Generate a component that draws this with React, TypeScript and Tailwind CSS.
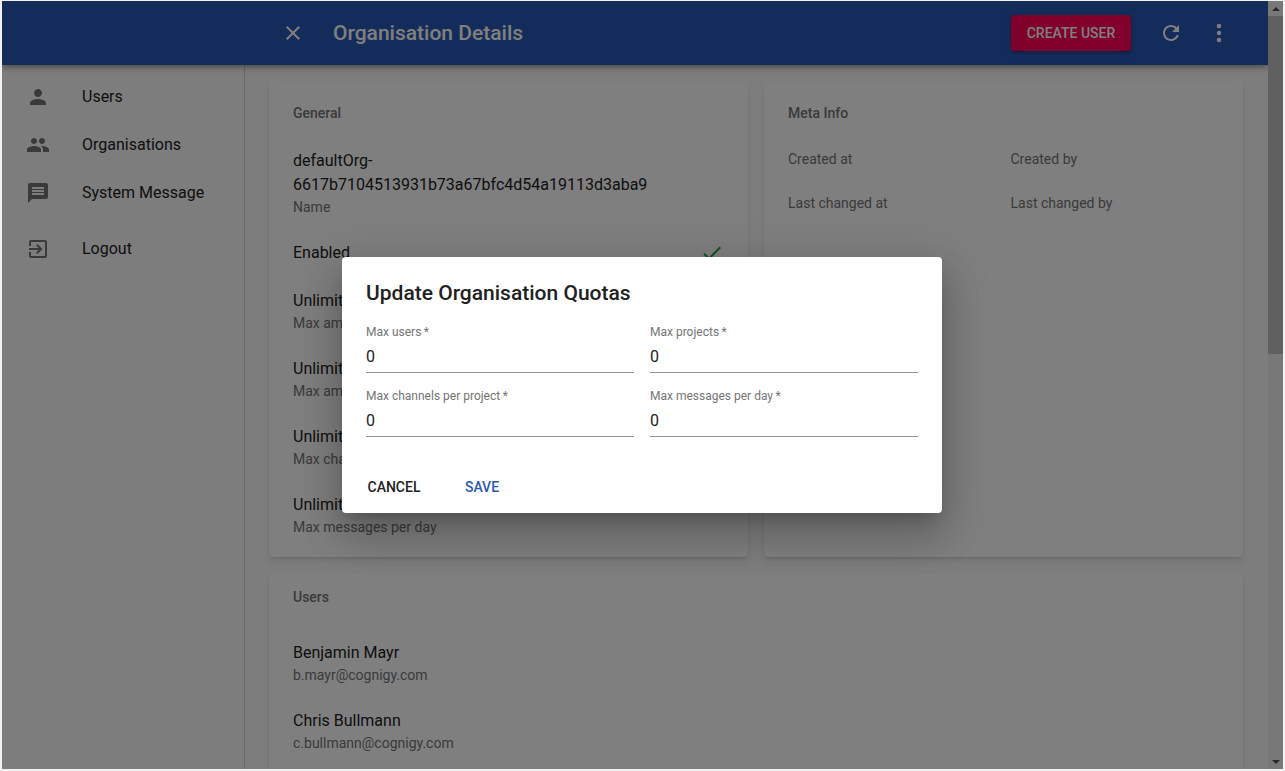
import React from 'react';
import { MoreVertical } from 'lucide-react';

const Ic: React.FC<{ d: string; className?: string }> = ({ d, className }) => (
  <svg viewBox="0 0 24 24" className={className} fill="currentColor">
    <path d={d} />
  </svg>
);

const PERSON = 'M12 12c2.21 0 4-1.79 4-4s-1.79-4-4-4-4 1.79-4 4 1.79 4 4 4zm0 2c-2.67 0-8 1.34-8 4v2h16v-2c0-2.66-5.33-4-8-4z';
const PEOPLE = 'M16 11c1.66 0 2.99-1.34 2.99-3S17.66 5 16 5c-1.66 0-3 1.34-3 3s1.34 3 3 3zm-8 0c1.66 0 2.99-1.34 2.99-3S9.66 5 8 5C6.34 5 5 6.34 5 8s1.34 3 3 3zm0 2c-2.33 0-7 1.17-7 3.5V19h14v-2.5c0-2.33-4.67-3.5-7-3.5zm8 0c-.29 0-.62.02-.97.05 1.16.84 1.97 1.97 1.97 3.45V19h6v-2.5c0-2.33-4.67-3.5-7-3.5z';
const MESSAGE = 'M20 2H4c-1.1 0-1.99.9-1.99 2L2 22l4-4h14c1.1 0 2-.9 2-2V4c0-1.1-.9-2-2-2zm-2 12H6v-2h12v2zm0-3H6V9h12v2zm0-3H6V6h12v2z';
const EXIT = 'M10.09 15.59L11.5 17l5-5-5-5-1.41 1.41L12.67 11H3v2h9.67l-2.58 2.59zM19 3H5c-1.11 0-2 .9-2 2v4h2V5h14v14H5v-4H3v4c0 1.1.89 2 2 2h14c1.1 0 2-.9 2-2V5c0-1.1-.9-2-2-2z';
const CLOSE = 'M19 6.41L17.59 5 12 10.59 6.41 5 5 6.41 10.59 12 5 17.59 6.41 19 12 13.41 17.59 19 19 17.59 13.41 12z';
const REFRESH = 'M17.65 6.35C16.2 4.9 14.21 4 12 4c-4.42 0-7.99 3.58-7.99 8s3.57 8 7.99 8c3.73 0 6.84-2.55 7.73-6h-2.08c-.82 2.33-3.04 4-5.65 4-3.31 0-6-2.69-6-6s2.69-6 6-6c1.66 0 3.14.69 4.22 1.78L13 11h7V4l-2.35 2.35z';
const CHECK = 'M9 16.17L4.83 12l-1.42 1.41L9 19 21 7l-1.41-1.41z';

const NAV = [
  { label: 'Users', d: PERSON, cls: 'h-[48px]' },
  { label: 'Organisations', d: PEOPLE, cls: 'h-[48px]' },
  { label: 'System Message', d: MESSAGE, cls: 'h-[48px]' },
  { label: 'Logout', d: EXIT, cls: 'h-[48px] mt-2' },
];

const Field: React.FC<{ primary: string; secondary: string }> = ({ primary, secondary }) => (
  <div className="mb-[24px]">
    <div className="text-base leading-6 text-[#212121]">{primary}</div>
    <div className="text-sm leading-5 text-[#757575]">{secondary}</div>
  </div>
);

const QuotaInput: React.FC<{ label: string }> = ({ label }) => (
  <div className="h-[48px] flex flex-col border-b border-[#949494]">
    <div className="text-xs leading-[14px] text-[#757575]">{label}{'\u2009'}*</div>
    <div className="mt-[4px] text-base leading-[28px] text-[#212121]">0</div>
  </div>
);

export default function App() {
  return (
    <div className="h-[771px] overflow-hidden bg-[#f2f2f2] pl-[2px] pr-[2px] pt-px pb-[2px] font-['Roboto',sans-serif]">
      <div className="relative h-full flex overflow-hidden">
        <div className="flex-1 min-w-0 flex flex-col bg-[#fafafa] overflow-hidden">
          {/* Top bar */}
          <header className="h-[64px] shrink-0 bg-[#2858b4] flex items-center pl-[279px] pr-[37px] shadow-[0_2px_4px_-1px_rgba(0,0,0,0.2),0_4px_5px_0_rgba(0,0,0,0.14),0_1px_10px_0_rgba(0,0,0,0.12)] z-10">
            <Ic d={CLOSE} className="w-6 h-6 text-white" />
            <h1 className="ml-[28px] text-[21px] leading-8 font-medium text-white">Organisation Details</h1>
            <button className="ml-auto w-[120px] h-[36px] rounded bg-[#ff0054] text-white text-sm font-medium shadow-[0_1px_5px_0_rgba(0,0,0,0.2),0_2px_2px_0_rgba(0,0,0,0.14),0_3px_1px_-2px_rgba(0,0,0,0.12)]">CREATE USER</button>
            <Ic d={REFRESH} className="ml-[28px] w-6 h-6 text-white" />
            <MoreVertical className="ml-[24px] w-6 h-6 text-white" strokeWidth={2.5} />
          </header>

          <div className="flex-1 flex min-h-0">
            {/* Sidebar */}
            <nav className="w-[243px] shrink-0 border-r border-[#d4d4d4] pt-[8px]">
              {NAV.map((item) => (
                <div key={item.label} className={`flex items-center pl-[24px] ${item.cls}`}>
                  <Ic d={item.d} className="w-6 h-6 text-[#757575]" />
                  <span className="ml-[32px] text-base text-[#212121]">{item.label}</span>
                </div>
              ))}
            </nav>

            {/* Details */}
            <main className="flex-1 min-w-0 pt-[16px] pl-[24px] pr-[25px]">
              <div className="flex gap-[16px]">
                <section className="flex-1 h-[476px] bg-white rounded shadow-md px-[24px] pt-[24px]">
                  <div className="text-sm font-medium leading-4 text-[#757575] mb-[28px]">General</div>
                  <div className="mb-[24px]">
                    <div className="text-base leading-6 text-[#212121]">defaultOrg-<br />6617b7104513931b73a67bfc4d54a19113d3aba9</div>
                    <div className="text-sm leading-5 text-[#757575]">Name</div>
                  </div>
                  <div className="flex items-center justify-between h-6 mb-[24px]">
                    <span className="text-base text-[#212121]">Enabled</span>
                    <Ic d={CHECK} className="w-6 h-6 text-[#2e9e4f]" />
                  </div>
                  <Field primary="Unlimited" secondary="Max amount of users" />
                  <Field primary="Unlimited" secondary="Max amount of projects" />
                  <Field primary="Unlimited" secondary="Max channels per project" />
                  <Field primary="Unlimited" secondary="Max messages per day" />
                </section>
                <section className="flex-1 h-[476px] bg-white rounded shadow-md px-[24px] pt-[24px]">
                  <div className="text-sm font-medium leading-4 text-[#757575] mb-[30px]">Meta Info</div>
                  <div className="grid grid-cols-2 gap-x-[14px] gap-y-[28px] text-sm leading-4 text-[#757575]">
                    <div>Created at</div>
                    <div>Created by</div>
                    <div>Last changed at</div>
                    <div>Last changed by</div>
                  </div>
                </section>
              </div>
              <section className="mt-[16px] h-[400px] bg-white rounded shadow-md px-[24px] pt-[16px]">
                <div className="text-sm font-medium leading-4 text-[#757575] mb-[36px]">Users</div>
                <Field primary="Benjamin Mayr" secondary="b.mayr@cognigy.com" />
                <Field primary="Chris Bullmann" secondary="c.bullmann@cognigy.com" />
              </section>
            </main>
          </div>
        </div>

        {/* Scrollbar */}
        <div className="w-[15px] shrink-0 bg-[#f1f1f1] flex flex-col items-center">
          <div className="h-[15px] w-full flex items-center justify-center">
            <div className="w-0 h-0 border-x-[4px] border-x-transparent border-b-[4px] border-b-[#505050]" />
          </div>
          <div className="w-full h-[338px] bg-[#c1c1c1]" />
          <div className="mt-auto h-[15px] w-full flex items-center justify-center">
            <div className="w-0 h-0 border-x-[4px] border-x-transparent border-t-[4px] border-t-[#505050]" />
          </div>
        </div>

        {/* Dialog backdrop */}
        <div className="absolute inset-0 bg-black/50 z-20" />
        <div className="absolute z-30 left-[340px] top-[256px] w-[600px] h-[256px] bg-white rounded shadow-[0_11px_15px_-7px_rgba(0,0,0,0.2),0_24px_38px_3px_rgba(0,0,0,0.14),0_9px_46px_8px_rgba(0,0,0,0.12)] flex flex-col">
          <h2 className="px-[24px] pt-[20px] text-[21px] font-medium leading-8 text-[#212121]">Update Organisation Quotas</h2>
          <div className="mt-[16px] px-[24px] grid grid-cols-2 gap-x-[16px] gap-y-[16px]">
            <QuotaInput label="Max users" />
            <QuotaInput label="Max projects" />
            <QuotaInput label="Max channels per project" />
            <QuotaInput label="Max messages per day" />
          </div>
          <div className="mt-auto pb-[8px] pl-[8px] flex gap-[12px]">
            <button className="h-[36px] w-[88px] text-sm font-medium text-[#212121]">CANCEL</button>
            <button className="h-[36px] w-[64px] text-sm font-medium text-[#2858b4]">SAVE</button>
          </div>
        </div>
      </div>
    </div>
  );
}
